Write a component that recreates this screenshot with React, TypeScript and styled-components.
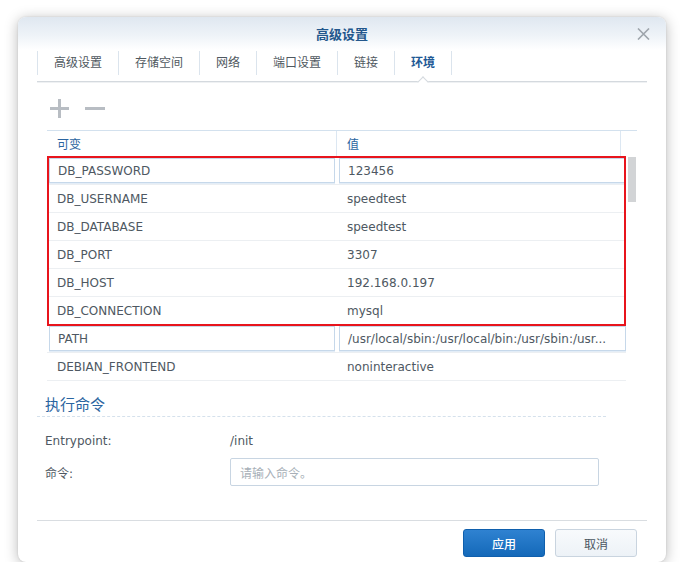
import React from "react";
import styled, { createGlobalStyle } from "styled-components";

const GlobalStyle = createGlobalStyle`
  html, body { margin: 0; padding: 0; background: #ffffff; }
  body {
    font-family: "DejaVu Sans", "Noto Sans CJK SC", sans-serif;
    font-size: 12px;
    color: #4e5862;
  }
  * { box-sizing: border-box; }
`;

const Page = styled.div`
  padding: 17px 0 0 18px;
`;

const Dialog = styled.div`
  width: 648px;
  height: 545px;
  background: #ffffff;
  border-radius: 8px;
  box-shadow: 0 2px 14px rgba(0, 0, 0, 0.28), 0 0 2px rgba(0, 0, 0, 0.12);
  display: flex;
  flex-direction: column;
  overflow: hidden;
`;

const TitleBar = styled.div`
  height: 33px;
  display: grid;
  grid-template-columns: 1fr auto 1fr;
  align-items: center;
  background: linear-gradient(to bottom, #dfe7f0 0%, #eef3f8 55%, #ffffff 100%);
`;

const Title = styled.div`
  grid-column: 2;
  font-family: "Noto Sans CJK SC", sans-serif;
  font-size: 13px;
  font-weight: 700;
  color: #23578c;
  line-height: 18px;
`;

const CloseButton = styled.div`
  grid-column: 3;
  justify-self: end;
  margin-right: 16px;
  width: 13px;
  height: 12px;
  display: flex;
  svg { display: block; }
`;

const TabBar = styled.div`
  margin: 0 19px;
  height: 32px;
  display: flex;
  align-items: stretch;
  border-bottom: 1px solid #d4d9de;
  box-shadow: 0 1px 0 #eff1f3;
`;

const Tab = styled.div<{ $active?: boolean; $last?: boolean }>`
  position: relative;
  padding: 0 16px 0 17px;
  line-height: 24px;
  height: 31px;
  font-family: "Noto Sans CJK SC", sans-serif;
  font-size: 12px;
  font-weight: ${(p) => (p.$active ? 700 : 400)};
  color: ${(p) => (p.$active ? "#1f5a96" : "#4f5860")};
  &::before {
    content: "";
    position: absolute;
    left: 0;
    top: 1px;
    width: 1px;
    height: 24px;
    background: #dbe4ed;
  }
  ${(p) =>
    p.$last &&
    `&::after {
      content: "";
      position: absolute;
      right: -1px;
      top: 1px;
      width: 1px;
      height: 24px;
      background: #dbe4ed;
    }`}
`;

const Notch = styled.span`
  position: absolute;
  left: 50%;
  bottom: -5px;
  width: 8px;
  height: 8px;
  margin-left: -4px;
  background: #ffffff;
  border-top: 1px solid #d4d9de;
  border-left: 1px solid #d4d9de;
  transform: rotate(45deg);
`;

const Content = styled.div`
  flex: 1;
  padding: 0 19px;
  display: flex;
  flex-direction: column;
`;

const Toolbar = styled.div`
  height: 48px;
  display: flex;
  align-items: center;
  gap: 16px;
  padding-left: 13px;
  padding-top: 4px;
  svg { display: block; }
`;

const Table = styled.div`
  margin-left: 10px;
  width: 590px;
  display: flex;
  flex-direction: column;
`;

const HeaderRow = styled.div`
  display: grid;
  grid-template-columns: 290px 284px 16px;
  height: 27px;
  border-top: 1px solid #d3e1ee;
`;

const HeaderCell = styled.div<{ $divider?: boolean }>`
  padding-left: 10px;
  line-height: 26px;
  font-family: "Noto Sans CJK SC", sans-serif;
  font-size: 12px;
  color: #2a64a0;
  border-right: ${(p) => (p.$divider ? "1px solid #dce7f2" : "none")};
`;

const BodyWrap = styled.div`
  display: flex;
  gap: 2px;
`;

const Rows = styled.div`
  width: 579px;
  display: flex;
  flex-direction: column;
`;

const Highlight = styled.div`
  position: relative;
  &::after {
    content: "";
    position: absolute;
    inset: -1px 0 -1px 0;
    border: 2px solid #e8141c;
    pointer-events: none;
  }
`;

const Row = styled.div`
  display: grid;
  grid-template-columns: 290px 289px;
  height: 28px;
  align-items: center;
  border-bottom: 1px solid #eceff2;
`;

const Cell = styled.div<{ $editing?: boolean }>`
  height: ${(p) => (p.$editing ? "25px" : "27px")};
  margin: ${(p) => (p.$editing ? "0 2px" : "0")};
  padding: ${(p) => (p.$editing ? "1px 4px 0 8px" : "2px 4px 0 10px")};
  line-height: ${(p) => (p.$editing ? "23px" : "25px")};
  border: ${(p) => (p.$editing ? "1px solid #c6d8ea" : "none")};
  background: #ffffff;
  box-shadow: ${(p) => (p.$editing ? "0 1px 0 #e3edf7" : "none")};
  color: #4e5862;
  white-space: nowrap;
  overflow: hidden;
  &:last-child {
    margin-right: 0;
  }
`;

const ScrollTrack = styled.div`
  width: 8px;
`;

const ScrollThumb = styled.div`
  width: 8px;
  height: 45px;
  background: #d2d4d6;
`;

const SectionTitle = styled.div`
  margin-top: 12px;
  width: 569px;
  height: 24px;
  padding-left: 8px;
  line-height: 22px;
  font-family: "Noto Sans CJK SC", sans-serif;
  font-size: 15px;
  color: #2a64a0;
  border-bottom: 1px dashed #d5e1ec;
`;

const Form = styled.div`
  margin-top: 9px;
  display: flex;
  flex-direction: column;
  gap: 4px;
`;

const FormRow = styled.div`
  display: grid;
  grid-template-columns: 185px 369px;
  height: 28px;
  align-items: center;
  padding-left: 8px;
`;

const Label = styled.div`
  color: #4e5862;
  padding-top: 1px;
`;

const Value = styled.div`
  color: #4e5862;
  padding-top: 1px;
`;

const TextInput = styled.input`
  width: 369px;
  height: 28px;
  border: 1px solid #c8d5e2;
  border-radius: 2px;
  padding: 0 9px;
  font-family: "Noto Sans CJK SC", sans-serif;
  font-size: 12px;
  color: #4e5862;
  outline: none;
  &::placeholder { color: #a7afb7; }
`;

const Footer = styled.div`
  margin: 0 19px;
  border-top: 1px solid #d9dde1;
  padding: 8px 10px 0 0;
  height: 42px;
  display: flex;
  justify-content: flex-end;
  gap: 10px;
`;

const Button = styled.button<{ $primary?: boolean }>`
  width: 82px;
  height: 28px;
  border-radius: 3px;
  font-family: "Noto Sans CJK SC", sans-serif;
  font-size: 12px;
  font-weight: ${(p) => (p.$primary ? 500 : 400)};
  cursor: pointer;
  color: ${(p) => (p.$primary ? "#ffffff" : "#4b5661")};
  border: 1px solid ${(p) => (p.$primary ? "#0f5fad" : "#c9d4df")};
  background: ${(p) =>
    p.$primary
      ? "linear-gradient(to bottom, #2f82d1 0%, #1469b9 100%)"
      : "linear-gradient(to bottom, #f8fafc 0%, #edf2f7 100%)"};
`;

type Env = { key: string; value: string; editing?: boolean };

const highlighted: Env[] = [
  { key: "DB_PASSWORD", value: "123456", editing: true },
  { key: "DB_USERNAME", value: "speedtest" },
  { key: "DB_DATABASE", value: "speedtest" },
  { key: "DB_PORT", value: "3307" },
  { key: "DB_HOST", value: "192.168.0.197" },
  { key: "DB_CONNECTION", value: "mysql" },
];

const others: Env[] = [
  {
    key: "PATH",
    value: "/usr/local/sbin:/usr/local/bin:/usr/sbin:/usr...",
    editing: true,
  },
  { key: "DEBIAN_FRONTEND", value: "noninteractive" },
];

const tabs = ["高级设置", "存储空间", "网络", "端口设置", "链接", "环境"];

const EnvRow = ({ item }: { item: Env }) => (
  <Row>
    <Cell $editing={item.editing}>{item.key}</Cell>
    <Cell $editing={item.editing}>{item.value}</Cell>
  </Row>
);

export default function App() {
  return (
    <>
      <GlobalStyle />
      <Page>
        <Dialog>
          <TitleBar>
            <Title>高级设置</Title>
            <CloseButton>
              <svg width="13" height="12" viewBox="0 0 13 12">
                <path d="M1 0.5 L12 11.5 M12 0.5 L1 11.5" stroke="#9ea5ac" strokeWidth="1.6" fill="none" />
              </svg>
            </CloseButton>
          </TitleBar>
          <TabBar>
            {tabs.map((t, i) => (
              <Tab key={t} $active={i === tabs.length - 1} $last={i === tabs.length - 1}>
                {t}
                {i === tabs.length - 1 && <Notch />}
              </Tab>
            ))}
          </TabBar>
          <Content>
            <Toolbar>
              <svg width="19" height="19" viewBox="0 0 19 19">
                <path d="M9.5 0 V19 M0 9.5 H19" stroke="#b8bdc3" strokeWidth="3" fill="none" />
              </svg>
              <svg width="20" height="19" viewBox="0 0 20 19">
                <path d="M0 9.5 H20" stroke="#b8bdc3" strokeWidth="3" fill="none" />
              </svg>
            </Toolbar>
            <Table>
              <HeaderRow>
                <HeaderCell $divider>可变</HeaderCell>
                <HeaderCell $divider>值</HeaderCell>
                <HeaderCell />
              </HeaderRow>
              <BodyWrap>
                <Rows>
                  <Highlight>
                    {highlighted.map((e) => (
                      <EnvRow key={e.key} item={e} />
                    ))}
                  </Highlight>
                  {others.map((e) => (
                    <EnvRow key={e.key} item={e} />
                  ))}
                </Rows>
                <ScrollTrack>
                  <ScrollThumb />
                </ScrollTrack>
              </BodyWrap>
            </Table>
            <SectionTitle>执行命令</SectionTitle>
            <Form>
              <FormRow>
                <Label>Entrypoint:</Label>
                <Value>/init</Value>
              </FormRow>
              <FormRow>
                <Label>命令:</Label>
                <TextInput placeholder="请输入命令。" />
              </FormRow>
            </Form>
          </Content>
          <Footer>
            <Button $primary>应用</Button>
            <Button>取消</Button>
          </Footer>
        </Dialog>
      </Page>
    </>
  );
}
